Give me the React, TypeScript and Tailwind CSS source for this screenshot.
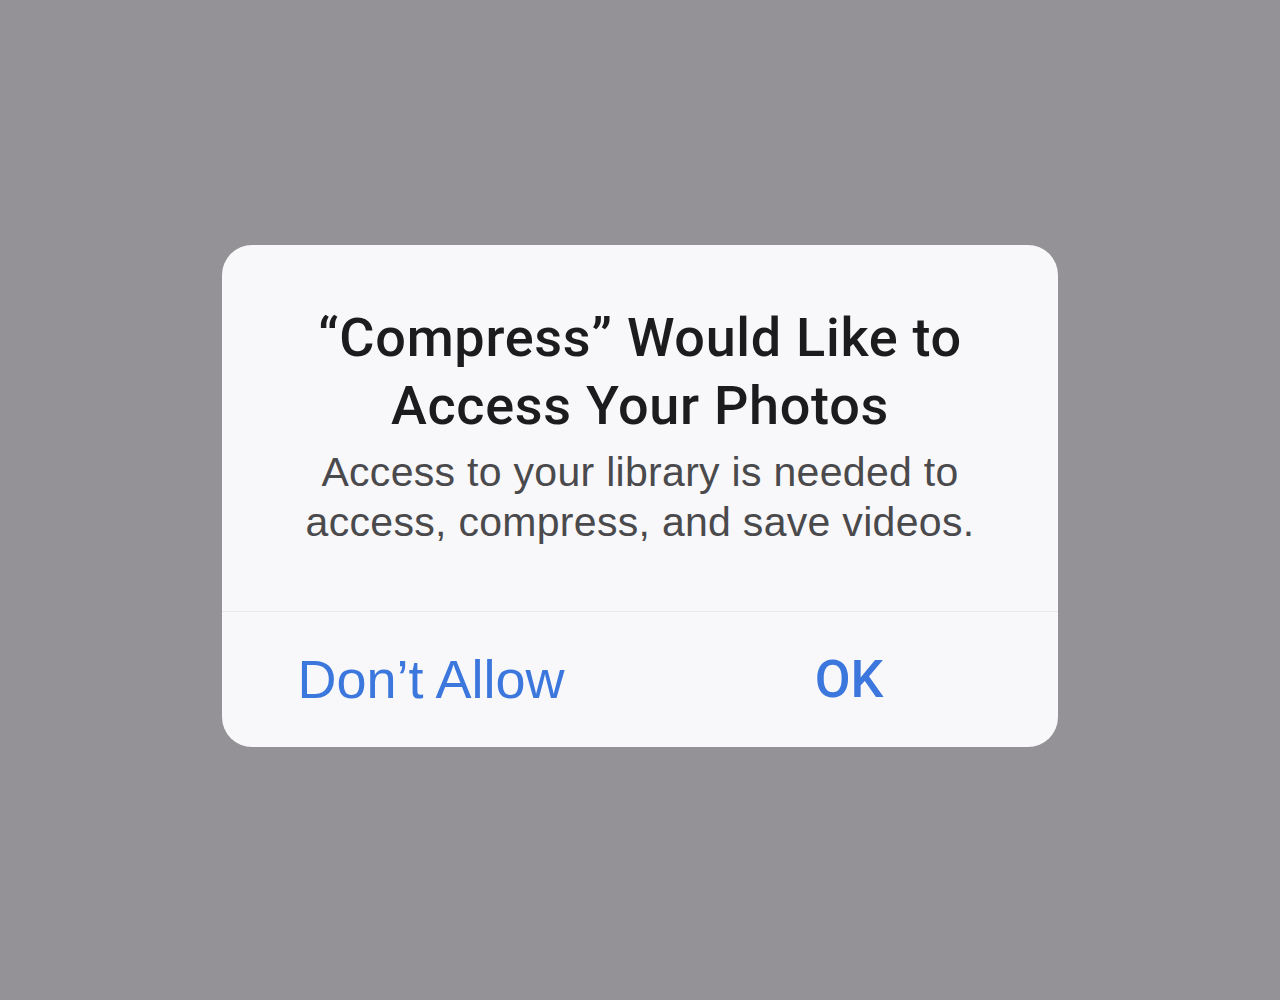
export default function App() {
  return (
    <div className="flex h-[1000px] w-full items-start justify-center bg-[#949296] pt-[245px] font-['Liberation_Sans',Arial,sans-serif]">
      <div className="flex w-[836px] flex-col overflow-hidden rounded-[30px] bg-[#f8f7fa]">
        <div className="flex flex-col items-center px-8 pt-[59px] pb-[64px] text-center">
          <h1 className="font-['Roboto',Arial,sans-serif] text-[54px] leading-[68px] font-medium tracking-[0.7px] text-[#1c1c1e]">
            “Compress” Would Like to
            <br />
            Access Your Photos
          </h1>
          <p className="mt-[7px] text-[41px] leading-[50px] tracking-[0.3px] text-[#4a4a4d]">
            Access to your library is needed to
            <br />
            access, compress, and save videos.
          </p>
        </div>
        <div className="grid h-[136px] grid-cols-2 border-t border-[#e8e7ec]">
          <button className="flex items-center justify-center text-[54px] text-[#3b77dc]">
            Don’t Allow
          </button>
          <button className="flex items-center justify-center font-['Roboto',Arial,sans-serif] text-[52px] font-medium text-[#3b77dc]">
            OK
          </button>
        </div>
      </div>
    </div>
  )
}
